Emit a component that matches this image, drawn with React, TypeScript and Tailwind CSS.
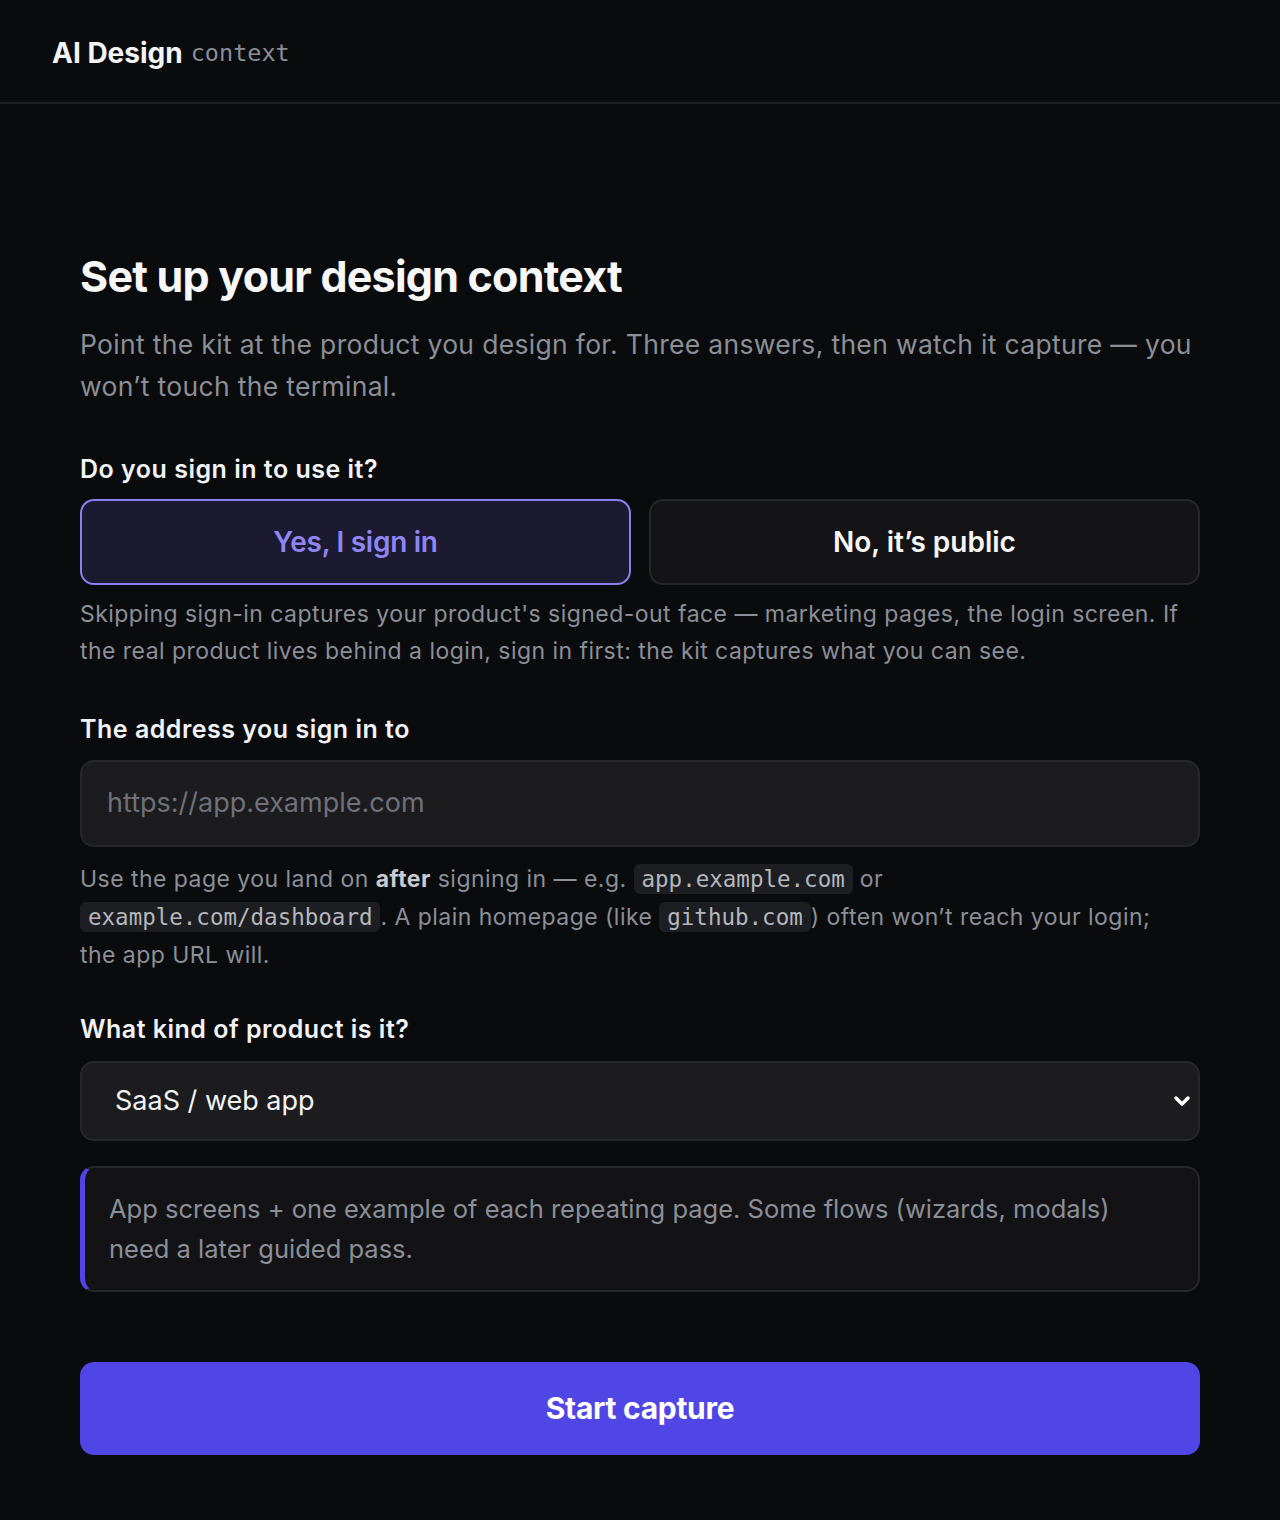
import { ChevronDown } from "lucide-react";

const sans = "font-['Inter','Noto_Sans',sans-serif]";
const mono = "font-['DejaVu_Sans_Mono','Liberation_Mono',monospace]";

function Code({ children }: { children: string }) {
  return (
    <code
      className={`${mono} rounded-md bg-[#1d1e22] px-[8px] py-[2px] text-[22.5px] tracking-normal text-[#b4b7be]`}
    >
      {children}
    </code>
  );
}

function Label({ children }: { children: string }) {
  return (
    <h2 className="text-[25px] font-semibold leading-[32px] tracking-[0.02em] text-[#f2f3f5]">{children}</h2>
  );
}

export default function App() {
  return (
    <div className={`${sans} min-h-[1520px] bg-[#0a0b0d] text-white`}>
      <header className="flex h-[104px] items-center border-b-2 border-[#1f2024] px-[52px] pt-[3px]">
        <span className="text-[28px] font-bold text-[#f3f4f6]">AI Design</span>
        <span className={`${mono} ml-[8px] mt-[2px] text-[23.5px] text-[#8a8e97]`}>context</span>
      </header>

      <main className="mx-auto w-[1120px] pt-[146px]">
        <h1 className="text-[43px] font-bold leading-[52px] tracking-[-0.018em] text-[#f7f7f8]">
          Set up your design context
        </h1>
        <p className="mt-[21px] text-[26.5px] leading-[42px] tracking-[0.012em] text-[#8b8f98]">
          Point the kit at the product you design for. Three answers, then watch it capture — you won’t touch the
          terminal.
        </p>

        <div className="mt-[46px]">
          <Label>Do you sign in to use it?</Label>
          <div className="mt-[14px] grid grid-cols-2 gap-[18px]">
            <button className="h-[86px] rounded-[14px] border-2 border-[#8a80ee] bg-[#1b1a31] text-[28px] font-semibold tracking-[-0.01em] text-[#8f86f3]">
              Yes, I sign in
            </button>
            <button className="h-[86px] rounded-[14px] border-2 border-[#26272b] bg-[#141416] text-[28px] font-semibold text-[#f6f6f7]">
              No, it’s public
            </button>
          </div>
          <p className="mt-[11px] text-[23px] leading-[37px] tracking-[0.02em] text-[#8b8f98]">
            Skipping sign-in captures your product's signed-out face — marketing pages, the login screen. If the real
            product lives behind a login, sign in first: the kit captures what you can see.
          </p>
        </div>

        <div className="mt-[43px]">
          <Label>The address you sign in to</Label>
          <div className="mt-[15px] flex h-[87px] items-center rounded-[14px] border-2 border-[#26272b] bg-[#1c1c1f] px-[25px] text-[27px] text-[#6e7179]">
            https://app.example.com
          </div>
          <p className="mt-[13px] text-[23px] leading-[38px] tracking-[0.02em] text-[#8b8f98]">
            Use the page you land on <b className="font-bold text-[#c9cbd0]">after</b> signing in — e.g.{" "}
            <Code>app.example.com</Code> or
            <br />
            <Code>example.com/dashboard</Code>. A plain homepage (like <Code>github.com</Code>) often won’t reach your
            login;
            <br />
            the app URL will.
          </p>
        </div>

        <div className="mt-[39px]">
          <Label>What kind of product is it?</Label>
          <div className="mt-[16px] flex h-[80px] items-center justify-between rounded-[14px] border-2 border-[#26272b] bg-[#1c1c1f] pl-[33px] pr-[4px] text-[27px] text-[#f3f4f6]">
            <span>SaaS / web app</span>
            <ChevronDown className="h-[24px] w-[24px] text-white" strokeWidth={3.5} />
          </div>
          <div className="mt-[25px] rounded-[14px] border-2 border-l-[5px] border-[#26272b] border-l-[#4f46e5] bg-[#131316] py-[21px] pl-[24px] pr-[24px] text-[25.5px] leading-[40px] text-[#8b8f98]">
            App screens + one example of each repeating page. Some flows (wizards, modals) need a later guided pass.
          </div>
        </div>

        <button className="mt-[70px] flex h-[93px] w-full items-center justify-center rounded-[14px] bg-[#4f46e5] text-[30px] font-bold tracking-[-0.01em] text-white">
          Start capture
        </button>
      </main>
    </div>
  );
}
